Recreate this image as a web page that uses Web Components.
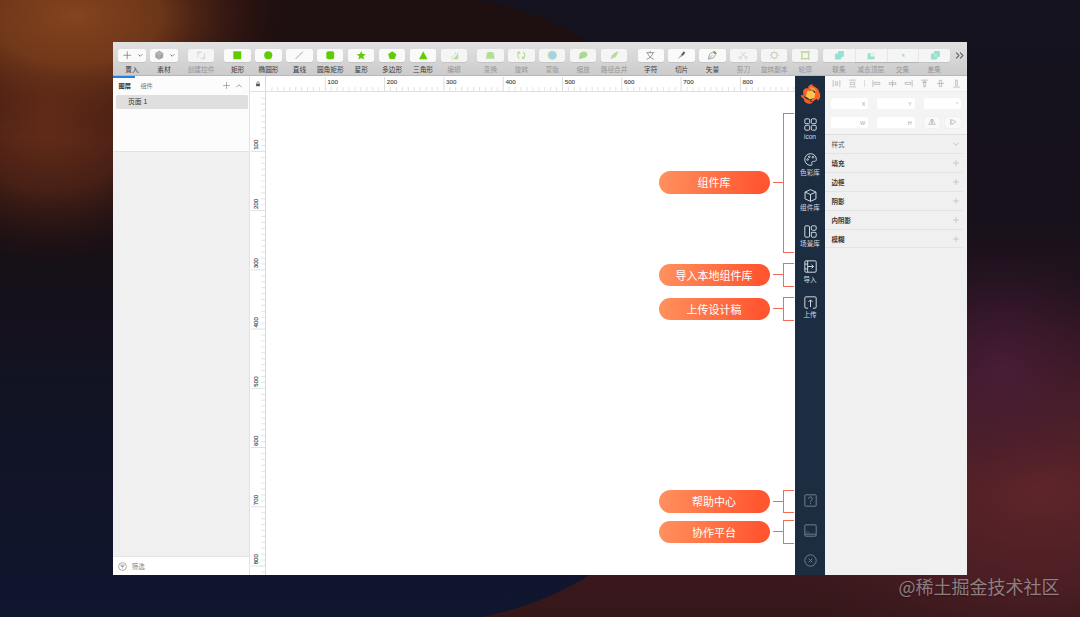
<!DOCTYPE html>
<html lang="zh-CN">
<head>
<meta charset="UTF-8">
<title>Design editor</title>
<style>
    html, body {
        margin: 0;
        width: 1080px;
        height: 617px;
        overflow: hidden;
        background: #15131e;
        font-family: "Liberation Sans", "Noto Sans CJK SC", sans-serif;
        color: #333;
    }
</style>
</head>
<body>
<app-stage>
    <app-window>
        <app-toolbar slot="toolbar"></app-toolbar>
        <layer-panel slot="layers"></layer-panel>
        <design-canvas slot="canvas">
            <call-out style="height:140px">组件库</call-out>
            <call-out style="margin-top:10.5px">导入本地组件库</call-out>
            <call-out style="margin-top:10.5px">上传设计稿</call-out>
            <call-out style="margin-top:auto">帮助中心</call-out>
            <call-out style="margin-top:7px">协作平台</call-out>
        </design-canvas>
        <plugin-bar slot="plugin"></plugin-bar>
        <inspector-panel slot="inspector"></inspector-panel>
    </app-window>
    <span slot="mark">@稀土掘金技术社区</span>
</app-stage>

<script>
const ICONS = {
    // toolbar
    plus: '<path d="M8 2v12M2 8h12" stroke="currentColor" fill="none"/>',
    down: '<path d="M3.500 6l4.500 4.500L12.500 6" stroke="currentColor" stroke-width="2" fill="none"/>',
    up: '<path d="M3 10.500l5-5 5 5" stroke="currentColor" stroke-width="1.400" fill="none"/>',
    material: '<path d="M8 1l6 3.500v7L8 15l-6-3.500v-7z" fill="#a3a3a3"/><path d="M2 4.500l6 3.500 6-3.500M8 8v7M5 3l6 3.500M11 3L5 6.500" stroke="#ccc" stroke-width=".8" fill="none"/>',
    symbol: '<path d="M3 11V3.500h6M13 5v7.500H7M5 1.500L3 3.500l2 2M11 10.500l2 2-2 2" stroke="#aaa" stroke-width="1.200" fill="none"/>',
    rect: '<path d="M2 2h12v12H2z" fill="#60cc06"/>',
    oval: '<circle cx="8" cy="8" r="6.200" fill="#60cc06"/>',
    line: '<path d="M2.500 13.500l11-11" stroke="#8f9a7d" stroke-width="1.300"/>',
    rounded: '<rect x="2" y="2" width="12" height="12" rx="3" fill="#60cc06"/>',
    star: '<path d="M8 1.500l2 4.600 5 .4-3.800 3.200 1.200 4.800L8 12l-4.400 2.500 1.200-4.800L1 6.500l5-.4z" fill="#60cc06"/>',
    polygon: '<path d="M8 2l6.300 4.600-2.400 7.200H4.100L1.700 6.600z" fill="#60cc06"/>',
    triangle: '<path d="M8 1.800l6.500 12.200h-13z" fill="#60cc06"/>',
    edit: '<path d="M14 2.500V14H2.500C8 13.500 12 9 14 2.500z" fill="#6fca2c"/><path d="M2.500 11c4 0 7-3 8-8" stroke="#aaa" fill="none"/>',
    transform: '<path d="M4 3h8l2.500 10.500h-13z" fill="#6fca2c"/><path d="M2 3.500v10M14 3.500v10" stroke="#aaa" stroke-width=".8" fill="none"/>',
    rotate: '<path d="M5 3C2 5 2 9.500 5 13M11 3c3.500 3 3 7 0 10M2 4l3-1 1 3M13 13h-3v-3" stroke="#7fbf44" stroke-width="1.800" fill="none"/>',
    mask: '<circle cx="8" cy="8" r="7" fill="#7dd15a"/><circle cx="8.500" cy="8" r="5.500" fill="#4fb2ee"/>',
    scale: '<path d="M2 14V8c1-8 13-7 12.500-1-.5 4-4.500 5.500-7.500 5.500z" fill="#5cc62c"/><path d="M2.500 13.500l5-5" stroke="#4b9a27"/>',
    path: '<path d="M2.500 13.500l2-6L12 2l2 2-4 7z" fill="#7fcf3c"/><path d="M3 13l8-8" stroke="#888"/>',
    text: '<path d="M2 4h12M8 1.500V4M4 4.500c1 4.500 4.500 8 9.500 9.500M12 4.500c-1 4.500-4.500 8-9.500 9.500" stroke="#777" stroke-width="1.100" fill="none"/>',
    slice: '<path d="M2 14l6-7 2 2z" fill="#aaa"/><path d="M8 7l4-5 2 2-4 5z" fill="#555"/>',
    vector: '<path d="M2 14l2-8 5-3 4 4-3 5z" fill="#f4f4f4" stroke="#888"/><path d="M9 3l2-2 4 4-2 2z" fill="#60b52d"/><path d="M2 14l6-6" stroke="#888"/>',
    scissors: '<path d="M4 3l8 8M12 3l-8 8" stroke="#999"/><circle cx="3.500" cy="12" r="2" fill="none" stroke="#8bb977"/><circle cx="12.500" cy="12" r="2" fill="none" stroke="#8bb977"/>',
    copies: '<circle cx="8" cy="8" r="4.500" fill="none" stroke="#83b45c" stroke-width="1.500"/><path d="M8 1v3M8 12v3M1 8h3M12 8h3M3 3l2 2M11 11l2 2M13 3l-2 2M5 11l-2 2" stroke="#999"/>',
    outline: '<path d="M3 3h10v10H3z" fill="none" stroke="#83b43c" stroke-width="2"/><path d="M1 1h3v3H1zM12 1h3v3h-3zM1 12h3v3H1zM12 12h3v3h-3z" fill="#a6bc82"/>',
    union: '<path d="M7.500 1.500H15V9q0 1.500-1.500 1.500H11V13q0 1.500-1.500 1.500h-8V7Q1.500 5.500 3 5.500h3V3q0-1.500 1.500-1.500z" fill="#3ccfae"/>',
    subtract: '<path d="M3 5h4v5h6v4H2z" fill="#3ccfae"/><path d="M8 3h5v5H8z" fill="#dce9e6"/>',
    intersect: '<path d="M6 5l4 2v4L6 9z" fill="#7fc4b6"/>',
    difference: '<path d="M7.500 1.500H15V9q0 1.500-1.500 1.500H11V13q0 1.500-1.500 1.500h-8V7Q1.500 5.500 3 5.500h3V3q0-1.500 1.500-1.500z" fill="#3ccfae"/><path d="M6.500 6.500h4v3.500h-4z" fill="#7fdcc8"/>',
    more: '<path d="M2 3l5 5-5 5M9 3l5 5-5 5" stroke="#555" stroke-width="1.800" fill="none"/>',
    // side panels
    lock: '<path d="M3 7h10v7H3z" fill="#555"/><path d="M5 7V4.500a3 3 0 0 1 6 0V7" stroke="#555" stroke-width="1.500" fill="none"/>',
    filter: '<circle cx="8" cy="8" r="7" fill="none" stroke="#888" stroke-width="1.200"/><path d="M4 5.500h8M5.500 8h5M7 10.500h2" stroke="#888" stroke-width="1.400"/>',
    // plugin bar
    grid: '<rect x="1" y="1" width="6" height="6" rx="1.500"/><rect x="9" y="1" width="6" height="6" rx="1.500"/><rect x="1" y="9" width="6" height="6" rx="1.500"/><rect x="9" y="9" width="6" height="6" rx="1.500"/>',
    palette: '<path d="M8 .8a7.200 7.200 0 1 0 1.300 14.300c1.200-.4.300-2.200.2-3.200 0-1.300 1-1.700 2.300-1.600 2 .2 3.400-.5 3.400-2.300A7.200 7.200 0 0 0 8 .8z"/><circle cx="4.500" cy="8" r="1"/><circle cx="6.500" cy="4.700" r="1"/><circle cx="11" cy="5.200" r="1"/>',
    cube: '<path d="M8 .8l6.700 3v8.400L8 15.200l-6.700-3V3.800zM1.300 3.800L8 6.800l6.700-3M8 6.800v8.400"/>',
    scene: '<rect x="1" y="1" width="5.800" height="14" rx="1.500"/><rect x="9" y="1" width="6" height="5.500" rx="1.500"/><path d="M9 9h4.500q1.500 0 1.500 1.500v3q0 1.500-1.500 1.500h-3Q9 15 9 13.500z"/>',
    import: '<rect x="1" y="1" width="14" height="14" rx="1.500"/><path d="M4.500 1v14M1 5h3.500M1 11h3.500M4.500 8h7M9.300 5.700L11.700 8l-2.400 2.300"/>',
    upload: '<path d="M5 15H2.500Q1 15 1 13.500v-11Q1 1 2.500 1h11Q15 1 15 2.500v11q0 1.500-1.500 1.500H11M8 13.500V5M5.500 7.300L8 4.800l2.500 2.500"/>',
    help: '<rect x="1" y="1" width="14" height="14" rx="1"/><path d="M5.700 6q0-2.500 2.300-2.500T10.300 6q0 1-1.200 1.800T8 10M8 11.200v1.300"/>',
    inbox: '<rect x="1" y="1" width="14" height="14" rx="1.500"/><path d="M1 12.500h14M3.500 9v1.500M5.500 10.500h1"/>',
    close: '<circle cx="8" cy="8" r="7"/><path d="M5.700 5.700l4.600 4.600M10.300 5.700l-4.600 4.600"/>',
    // alignment
    distH: '<path d="M2 2v12M14 2v12"/><path d="M6 5h4v6H6z"/>',
    distV: '<path d="M2 2h12M2 14h12M4 6h8v4H4z"/>',
    left: '<path d="M1.500 2v12M4 6h10v3.500H4z"/>',
    centerH: '<path d="M8 2v12M2 6.500h12v3H2z"/>',
    right: '<path d="M14.500 2v12M2 6h10v3.500H2z"/>',
    top: '<path d="M2 2h12M6.500 4h3v10h-3zM4 6h8"/>',
    centerV: '<path d="M2 8h12M6 2.500h4v11H6z"/>',
    bottom: '<path d="M2 14.500h12M6.500 2h3v10h-3z"/>',
    flipH: '<path d="M7 2v11H1.500zM9 2v11h5.500z"/>',
    flipV: '<path d="M3 2v12M5.500 3l8.500 5-8.500 5z"/>'
};

class UiIcon extends HTMLElement {
    constructor() {
        super();
        this.attachShadow({ mode: 'open' });
    }

    connectedCallback() {
        const size = this.getAttribute('size') || 10;
        const stroked = this.hasAttribute('stroked');
        this.shadowRoot.innerHTML = `
            <style>
                :host { display: block; flex: none; width: ${size}px; height: ${size}px; }
                svg { display: block; width: 100%; height: 100%; }
            </style>
            <svg viewBox="0 0 16 16" ${stroked ? 'fill="none" stroke="currentColor" stroke-width="1.2"' : ''}>${ICONS[this.getAttribute('name')]}</svg>
        `;
    }
}

class AppStage extends HTMLElement {
    constructor() {
        super();
        this.attachShadow({ mode: 'open' });
        this.shadowRoot.innerHTML = `
            <style>
                :host {
                    display: grid;
                    place-items: center;
                    position: relative;
                    width: 1080px;
                    height: 617px;
                }
                .backdrop { position: absolute; inset: 0; }
                .mark {
                    position: absolute;
                    right: 20.500px;
                    bottom: 18px;
                    font: 18px/26px "Noto Sans CJK SC", sans-serif;
                    color: rgba(255, 255, 255, .45);
                    text-shadow: 0 1px 2px rgba(0, 0, 0, .35);
                }
            </style>
            <svg class="backdrop" width="1080" height="617">
                <defs>
                    <linearGradient id="left" x2="0" y2="1">
                        <stop offset="0" stop-color="#1f0f10"/>
                        <stop offset=".4" stop-color="#160f16"/>
                        <stop offset=".65" stop-color="#121424"/>
                        <stop offset="1" stop-color="#10162f"/>
                    </linearGradient>
                    <linearGradient id="right" x2="0" y2="1">
                        <stop offset="0" stop-color="#14131f"/>
                        <stop offset=".35" stop-color="#17111b"/>
                        <stop offset=".6" stop-color="#2f1422"/>
                        <stop offset=".8" stop-color="#42191f"/>
                        <stop offset="1" stop-color="#35171a"/>
                    </linearGradient>
                    <radialGradient id="orange">
                        <stop offset="0" stop-color="#84441e"/>
                        <stop offset=".4" stop-color="#743a1a" stop-opacity=".9"/>
                        <stop offset=".75" stop-color="#4d2014" stop-opacity=".4"/>
                        <stop offset="1" stop-color="#2a1110" stop-opacity="0"/>
                    </radialGradient>
                    <radialGradient id="glow">
                        <stop offset="0" stop-color="#74331a" stop-opacity=".95"/>
                        <stop offset=".5" stop-color="#5c2716" stop-opacity=".7"/>
                        <stop offset="1" stop-color="#2a1110" stop-opacity="0"/>
                    </radialGradient>
                    <radialGradient id="ember">
                        <stop offset="0" stop-color="#5e252a"/>
                        <stop offset=".5" stop-color="#522127" stop-opacity=".7"/>
                        <stop offset="1" stop-color="#3c181d" stop-opacity="0"/>
                    </radialGradient>
                    <radialGradient id="violet">
                        <stop offset="0" stop-color="#4a1d3a" stop-opacity=".8"/>
                        <stop offset="1" stop-color="#3a1830" stop-opacity="0"/>
                    </radialGradient>
                </defs>
                <rect width="1080" height="617" fill="url(#right)"/>
                <ellipse cx="1040" cy="490" rx="290" ry="200" fill="url(#ember)"/>
                <ellipse cx="1000" cy="370" rx="130" ry="120" fill="url(#violet)"/>
                <path d="M0 0H482A314 314 0 0 1 482 617H0z" fill="url(#left)"/>
                <ellipse cx="50" cy="110" rx="180" ry="160" fill="url(#glow)"/>
                <ellipse cx="75" cy="15" rx="215" ry="125" fill="url(#orange)"/>
            </svg>
            <slot></slot>
            <div class="mark"><slot name="mark"></slot></div>
        `;
    }
}

class AppWindow extends HTMLElement {
    constructor() {
        super();
        this.attachShadow({ mode: 'open' });
        this.shadowRoot.innerHTML = `
            <style>
                :host {
                    display: grid;
                    grid-template-rows: 34px 499px;
                    position: relative;
                    width: 854px;
                    height: 533px;
                    background: #fff;
                    overflow: hidden;
                }
                .body { display: grid; grid-template-columns: 137px 1fr 30px 142px; }
            </style>
            <slot name="toolbar"></slot>
            <div class="body">
                <slot name="layers"></slot>
                <slot name="canvas"></slot>
                <slot name="plugin"></slot>
                <slot name="inspector"></slot>
            </div>
        `;
    }
}

class AppToolbar extends HTMLElement {
    constructor() {
        super();
        this.attachShadow({ mode: 'open' });
    }

    // an item is [icon, label, disabled]
    group(items, cls = '') {
        return `<div class="group ${cls}">${items.map(([icon, label, off]) => `
            <div class="item ${off ? 'off' : ''}">
                <div class="button">
                    <ui-icon name="${icon}" size="10.5"></ui-icon>
                    ${cls === 'menus' ? '<ui-icon name="down" size="6.5"></ui-icon>' : ''}
                </div>
                <div class="label">${label}</div>
            </div>`).join('')}</div>`;
    }

    connectedCallback() {
        this.shadowRoot.innerHTML = `
            <style>
                :host {
                    display: flex;
                    box-sizing: border-box;
                    padding: 7px 0 0 5.300px;
                    background: linear-gradient(#e2e1e2, #cdcccd);
                    border-bottom: 1px solid #b9b8b9;
                }
                .group { display: flex; gap: 4.700px; margin-right: 10.350px; }
                .group.tight { margin-right: 4.700px; }
                .item {
                    display: flex;
                    flex-direction: column;
                    align-items: center;
                    width: 26.230px;
                }
                .menus .item { width: 27.300px; }
                .button {
                    display: flex;
                    align-items: center;
                    justify-content: center;
                    width: 100%;
                    height: 13px;
                    border-radius: 2px;
                    background: #fafafa;
                    box-shadow: 0 .5px .5px rgba(0, 0, 0, .15);
                    color: #666;
                }
                .menus .button { justify-content: space-between; padding: 0 2px 0 4px; box-sizing: border-box; }
                .label {
                    margin-top: 3px;
                    font-size: 6.700px;
                    line-height: 9px;
                    white-space: nowrap;
                    color: #3a3a3a;
                }
                .off .label { color: #969596; }
                .off ui-icon { opacity: .5; }
                .off .button { background: #f5f5f5; }
                .joined { gap: 0; margin-right: 4.500px; }
                .joined .item { width: 31.800px; }
                .joined .button { border-radius: 0; }
                .joined .item + .item .button { border-left: 1px solid #e6e6e6; box-sizing: border-box; }
                .joined .item:first-child .button { border-radius: 2px 0 0 2px; }
                .joined .item:last-child .button { border-radius: 0 2px 2px 0; }
                .more { margin-top: 1.500px; }
            </style>
            ${this.group([['plus', '置入'], ['material', '素材']], 'menus')}
            ${this.group([['symbol', '创建控件', 1]])}
            ${this.group([['rect', '矩形'], ['oval', '椭圆形'], ['line', '直线'], ['rounded', '圆角矩形'],
                ['star', '星形'], ['polygon', '多边形'], ['triangle', '三角形'], ['edit', '编辑', 1]])}
            ${this.group([['transform', '变换', 1], ['rotate', '旋转', 1], ['mask', '蒙版', 1],
                ['scale', '缩放', 1], ['path', '路径合并', 1]])}
            ${this.group([['text', '字符'], ['slice', '切片'], ['vector', '矢量'],
                ['scissors', '剪刀', 1], ['copies', '旋转副本', 1], ['outline', '轮廓', 1]], 'tight')}
            ${this.group([['union', '联集', 1], ['subtract', '减去顶层', 1],
                ['intersect', '交集', 1], ['difference', '差集', 1]], 'joined')}
            <ui-icon class="more" name="more" size="9"></ui-icon>
        `;
    }
}

class LayerPanel extends HTMLElement {
    constructor() {
        super();
        this.attachShadow({ mode: 'open' });
        this.shadowRoot.innerHTML = `
            <style>
                :host {
                    display: flex;
                    flex-direction: column;
                    box-sizing: border-box;
                    border-right: 1px solid #e2e2e2;
                    background: #f0f0f0;
                    font-size: 6.200px;
                }
                .pages { height: 75px; background: #fcfcfc; border-bottom: 1px solid #e3e3e3; }
                .bar { width: 22px; height: 1.500px; background: #1f80ea; }
                .tabs {
                    display: flex;
                    align-items: center;
                    height: 16px;
                    padding: 0 6px 0 5.500px;
                    color: #777;
                }
                .tabs b { color: #333; margin-right: 9.500px; }
                .tabs ui-icon { margin-left: 4.500px; }
                .tabs .add { margin-left: auto; }
                .page {
                    height: 14px;
                    margin: 1.500px 1.500px 0 2.500px;
                    padding-left: 12.500px;
                    border-radius: 1.500px;
                    background: #dfdfdf;
                    font-size: 6.800px;
                    line-height: 14.500px;
                    color: #333;
                }
                .filter {
                    display: flex;
                    align-items: center;
                    gap: 4.500px;
                    height: 18px;
                    margin-top: auto;
                    padding-left: 5.200px;
                    background: #fff;
                    border-top: 1px solid #e6e6e6;
                    color: #888;
                    font-size: 6.500px;
                }
            </style>
            <div class="pages">
                <div class="bar"></div>
                <div class="tabs">
                    <b>图层</b><span>组件</span>
                    <ui-icon class="add" name="plus" size="9"></ui-icon>
                    <ui-icon name="up" size="8"></ui-icon>
                </div>
                <div class="page">页面 1</div>
            </div>
            <div class="filter"><ui-icon name="filter" size="9"></ui-icon>筛选</div>
        `;
    }
}

class DesignCanvas extends HTMLElement {
    constructor() {
        super();
        this.attachShadow({ mode: 'open' });
    }

    ruler(vertical) {
        const step = vertical ? 59.22 : 59.3;
        const origin = vertical ? 0.2 : 0;
        const limit = vertical ? 483 : 529;
        let out = '';
        for (let i = 1; origin + i * step / 10 < limit; i++) {
            const p = (origin + i * step / 10).toFixed(2);
            const major = i % 10 === 0;
            const from = major ? 1 : 11;
            out += vertical
                ? `<path d="M${from} ${p}H15" stroke="${major ? '#d4d4d4' : '#dadada'}"/>`
                : `<path d="M${p} ${from}V15" stroke="${major ? '#d0d0d0' : '#d8d8d8'}"/>`;
            if (major) {
                out += vertical
                    ? `<text transform="translate(7.8 ${p - 1.6}) rotate(-90)">${i * 10}</text>`
                    : `<text x="${+p + 2.2}" y="7.6">${i * 10}</text>`;
            }
        }
        return out;
    }

    connectedCallback() {
        this.shadowRoot.innerHTML = `
            <style>
                :host {
                    display: grid;
                    grid-template-columns: 16px 529px;
                    grid-template-rows: 16px 483px;
                    background: #fff;
                }
                .corner, .left { box-sizing: border-box; border-right: 1px solid #d9d9d9; }
                .corner, .top { box-sizing: border-box; border-bottom: 1px solid #e0e0e0; }
                .corner { display: grid; place-items: center; }
                svg { display: block; }
                path { stroke-width: .7; }
                text { font: 6.200px "Liberation Sans", sans-serif; fill: #444; stroke: #444; stroke-width: .12; }
                .area {
                    display: flex;
                    flex-direction: column;
                    box-sizing: border-box;
                    padding: 20.500px 1px 31.500px 0;
                    align-items: flex-end;
                }
            </style>
            <div class="corner"><ui-icon name="lock" size="6"></ui-icon></div>
            <div class="top"><svg width="529" height="16">${this.ruler(false)}</svg></div>
            <div class="left"><svg width="16" height="483">${this.ruler(true)}</svg></div>
            <div class="area"><slot></slot></div>
        `;
    }
}

class CallOut extends HTMLElement {
    constructor() {
        super();
        this.attachShadow({ mode: 'open' });
        this.shadowRoot.innerHTML = `
            <style>
                :host { display: flex; align-items: center; height: 23.500px; }
                .pill {
                    width: 111px;
                    height: 22.500px;
                    border-radius: 12px;
                    background: linear-gradient(100deg, #ff925f, #ff5630 90%);
                    color: #fff;
                    font: 11px/22px "Noto Sans CJK SC", sans-serif;
                    text-align: center;
                }
                .stem { width: 10px; height: 1.200px; margin-left: 3.500px; background: #f36b58; }
                .bracket {
                    align-self: stretch;
                    width: 11px;
                    box-sizing: border-box;
                    border: 1.500px solid #f36b58;
                    border-right: 0;
                }
            </style>
            <div class="pill"><slot></slot></div>
            <div class="stem"></div>
            <div class="bracket"></div>
        `;
    }
}

class PluginBar extends HTMLElement {
    constructor() {
        super();
        this.attachShadow({ mode: 'open' });
    }

    connectedCallback() {
        const items = [['grid', 'icon'], ['palette', '色彩库'], ['cube', '组件库'],
            ['scene', '场景库'], ['import', '导入'], ['upload', '上传']];
        this.shadowRoot.innerHTML = `
            <style>
                :host {
                    display: flex;
                    flex-direction: column;
                    align-items: center;
                    background: #1c2d41;
                    color: #d5dae0;
                }
                .logo { width: 21px; height: 21px; margin: 7.500px 0 12.500px 1px; flex: none; }
                .item {
                    display: flex;
                    flex-direction: column;
                    align-items: center;
                    height: 35.600px;
                    font-size: 6.600px;
                    line-height: 9px;
                    white-space: nowrap;
                }
                .item ui-icon { margin: .8px 0 1.500px; }
                .foot {
                    display: flex;
                    flex-direction: column;
                    gap: 16.700px;
                    margin: auto 0 8.500px;
                    color: #728091;
                }
            </style>
            <svg class="logo" viewBox="0 0 21 21">
                <path d="M12.500.3C9 .8 7.800 2.300 8.300 4.500 4.500 3.500 2.300 6.500 3.300 10c.5 1.800 2 3.200 4 3.500L7 8l5-2.500c2.500.5 3.800 2.500 4 5l3-1.500c.3-2.800-1.300-5-4.300-6.300-1.700-.7-2.500-1.400-2.200-2.400z" fill="#f4602a"/>
                <path d="M15.500 6.500c3.300.5 5.300 2.800 4.700 6-.3 1.800-1.200 3.300-2.600 4.600.3-1.800-.5-2.800-1.900-1.700-1.700 1.500-3.400 2-5.200 1.300l3.500-3.500z" fill="#f7642b"/>
                <path d="M.6 10.800c1.300.9 2.400.5 3.500-.5-.2 2.800 1.200 4.500 4 5.200 1.600.4 2.700 1.200 2.600 2.600 1.200-.2 2-.8 2.700-1.700-.3 2.300-2.500 3.700-5.100 3.400-2.900-.4-4.700-2.700-4.700-5.200C2.200 14.500 1 13 .6 10.800z" fill="#f15b27"/>
                <path d="M9.500 3.800c1.500-1 3.500-.6 5 .6 1 .8 1.700 1.800 1.800 3.100L12 6z" fill="#ff9a2e"/>
                <path d="M7.200 7l5-.8 3.100 3.600-.8 4-4.600 1.700-4-3z" fill="#ffc34b"/>
            </svg>
            ${items.map(([icon, label]) => `
                <div class="item"><ui-icon name="${icon}" size="13" stroked></ui-icon>${label}</div>`).join('')}
            <div class="foot">
                <ui-icon name="help" size="13" stroked></ui-icon>
                <ui-icon name="inbox" size="13" stroked></ui-icon>
                <ui-icon name="close" size="13" stroked></ui-icon>
            </div>
        `;
    }
}

class InspectorPanel extends HTMLElement {
    constructor() {
        super();
        this.attachShadow({ mode: 'open' });
    }

    connectedCallback() {
        const align = ['distH', 'distV', '', 'left', 'centerH', 'right', 'top', 'centerV', 'bottom'];
        const sections = ['填充', '边框', '阴影', '内阴影', '模糊'];
        this.shadowRoot.innerHTML = `
            <style>
                :host { display: block; background: #f0f0f0; font-size: 6.500px; }
                .align {
                    display: flex;
                    align-items: center;
                    justify-content: space-between;
                    height: 15px;
                    padding: 0 6px 0 7px;
                    background: #f9f9f9;
                    border-bottom: 1px solid #ececec;
                    color: #aaa;
                }
                .align i { width: 1px; height: 7px; background: #ddd; }
                .fields {
                    display: grid;
                    grid-template-columns: repeat(3, 37.300px);
                    gap: 7.500px 9.200px;
                    height: 42.500px;
                    box-sizing: border-box;
                    padding: 6px 0 0 6px;
                    background: #f4f4f4;
                    border-bottom: 1px solid #dedede;
                    align-content: start;
                }
                .field {
                    height: 11.300px;
                    box-sizing: border-box;
                    padding-right: 3px;
                    border-radius: 2px;
                    background: #fff;
                    color: #aaa;
                    font-size: 5.500px;
                    line-height: 12px;
                    text-align: right;
                }
                .flips { display: flex; justify-content: space-between; color: #aaa; }
                .flips div {
                    display: grid;
                    place-items: center;
                    width: 16px;
                    border-radius: 2px;
                    background: #f9f9f9;
                    box-shadow: 0 0 1px #ccc;
                }
                .section {
                    display: flex;
                    align-items: center;
                    justify-content: space-between;
                    height: 18.900px;
                    box-sizing: border-box;
                    margin: 0 4px 0 0;
                    padding: 0 3px 0 6.500px;
                    border-bottom: 1px solid #e4e4e4;
                    font-weight: bold;
                    color: #383838;
                }
                .section.style { height: 19.500px; font-weight: normal; color: #555; }
                .section ui-icon { color: #aaa; }
            </style>
            <div class="align">
                ${align.map(name => name ? `<ui-icon name="${name}" size="9" stroked></ui-icon>` : '<i></i>').join('')}
            </div>
            <div class="fields">
                <div class="field">X</div><div class="field">Y</div><div class="field">°</div>
                <div class="field">W</div><div class="field">H</div>
                <div class="flips">
                    <div><ui-icon name="flipH" size="8" stroked></ui-icon></div>
                    <div><ui-icon name="flipV" size="8" stroked></ui-icon></div>
                </div>
            </div>
            <div class="section style">样式<ui-icon name="up" size="8" style="transform:scaleY(-1)"></ui-icon></div>
            ${sections.map(name => `<div class="section">${name}<ui-icon name="plus" size="8"></ui-icon></div>`).join('')}
        `;
    }
}

window.customElements.define('ui-icon', UiIcon);
window.customElements.define('app-stage', AppStage);
window.customElements.define('app-window', AppWindow);
window.customElements.define('app-toolbar', AppToolbar);
window.customElements.define('layer-panel', LayerPanel);
window.customElements.define('design-canvas', DesignCanvas);
window.customElements.define('call-out', CallOut);
window.customElements.define('plugin-bar', PluginBar);
window.customElements.define('inspector-panel', InspectorPanel);
</script>
</body>
</html>
